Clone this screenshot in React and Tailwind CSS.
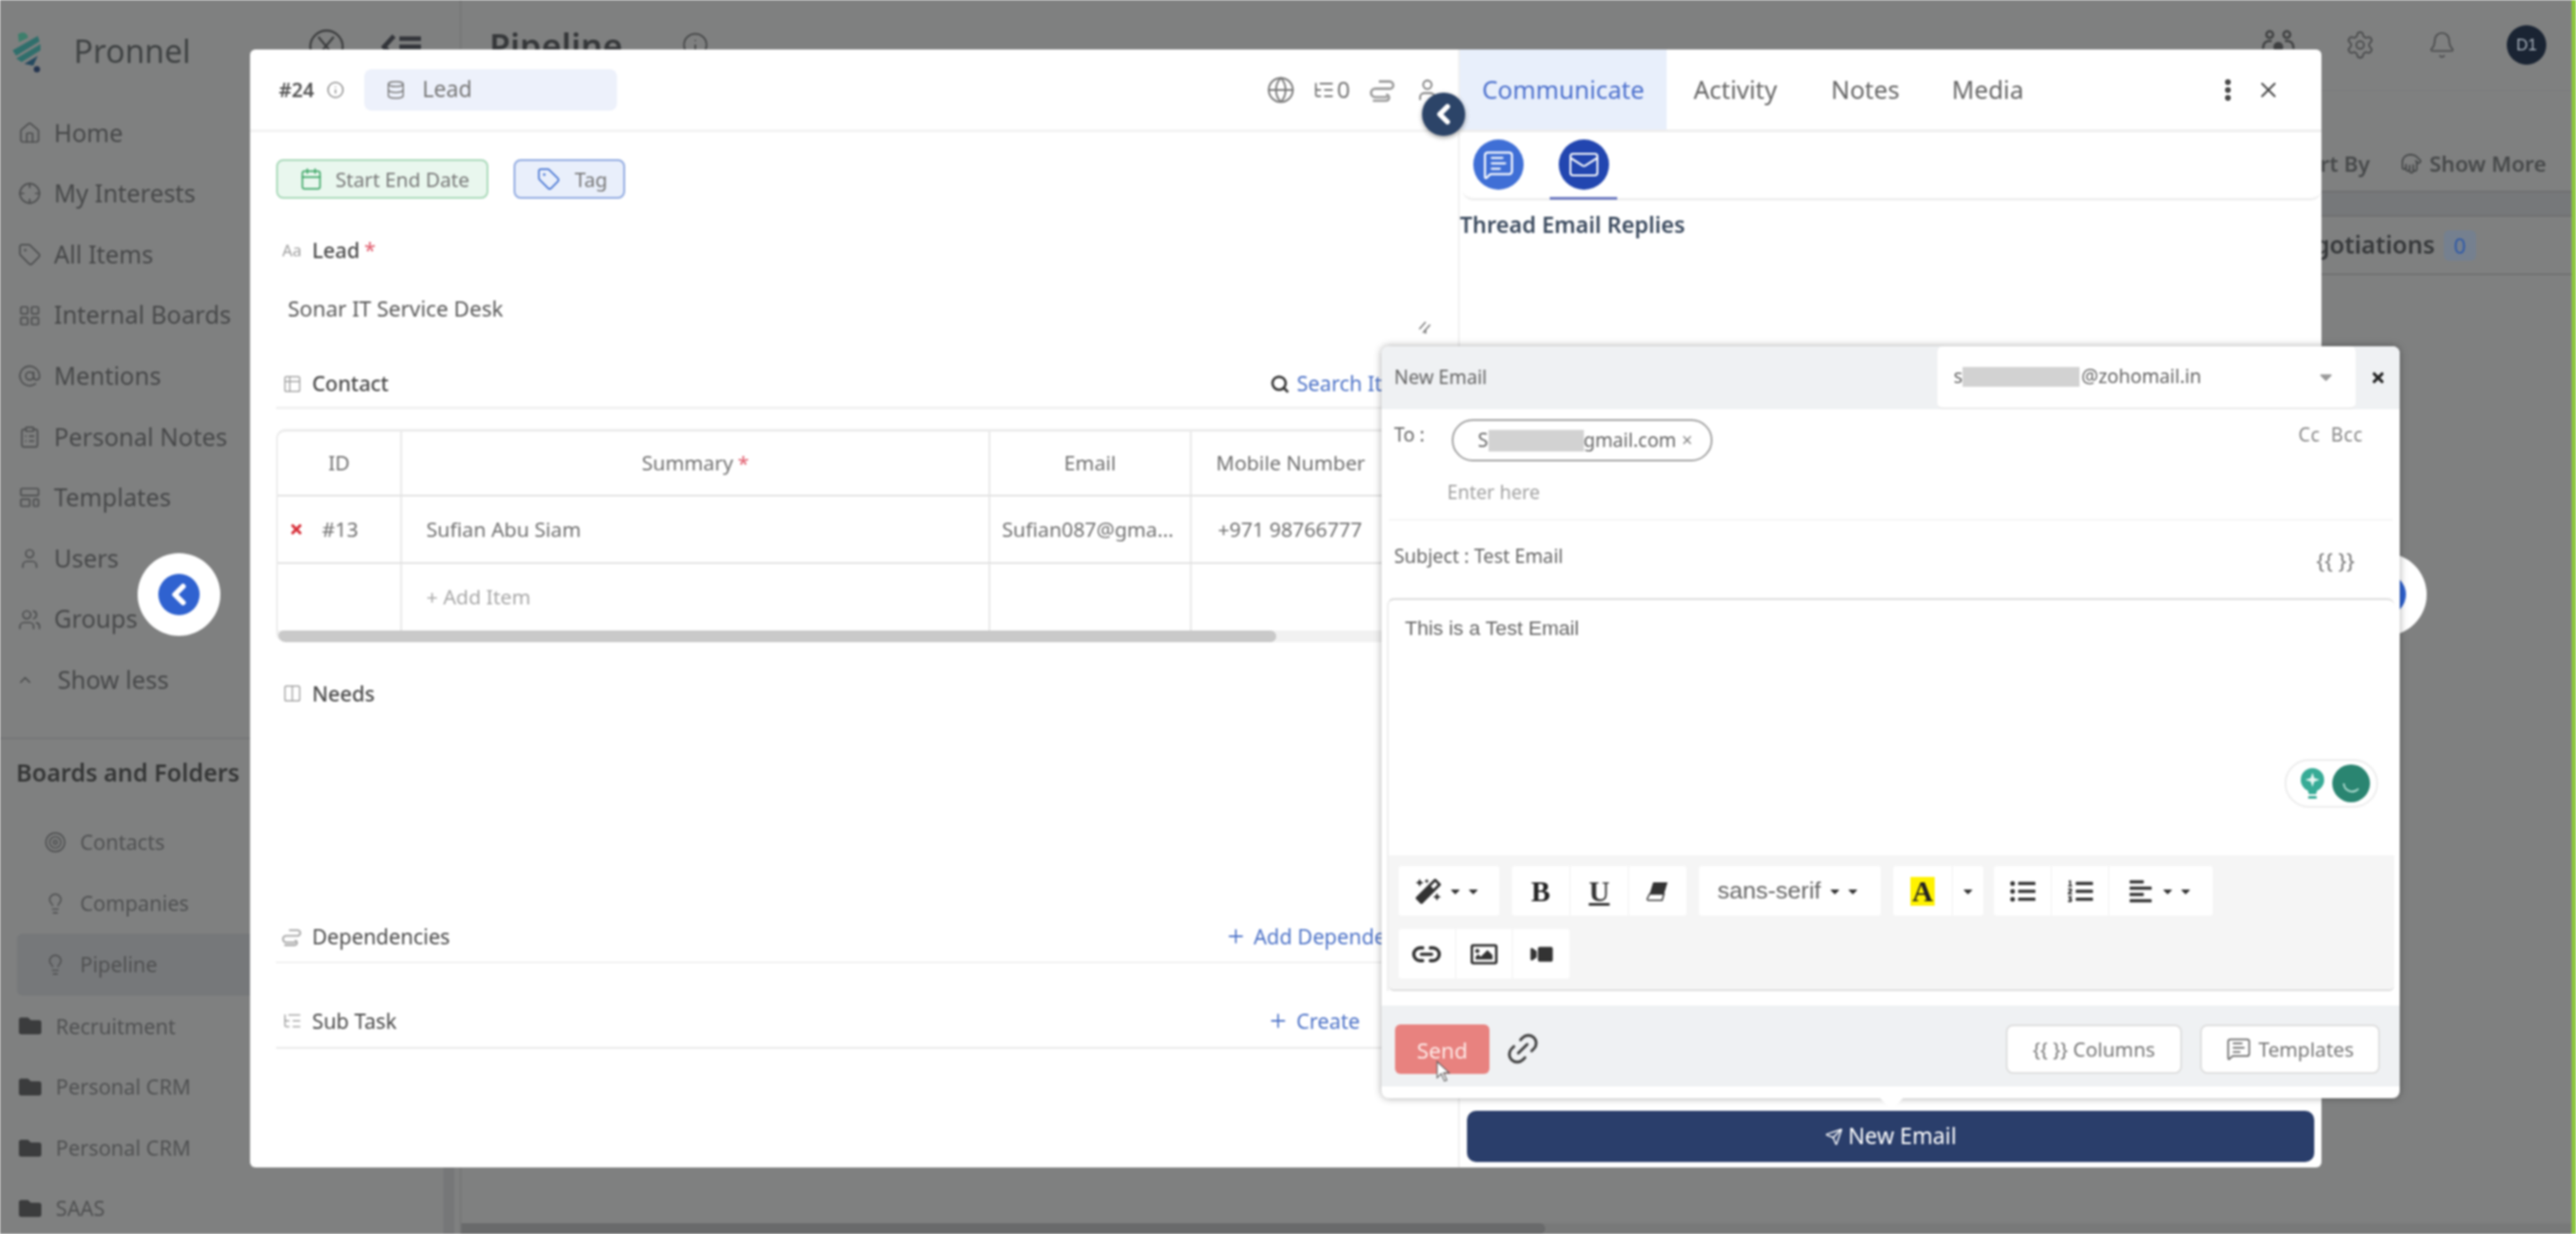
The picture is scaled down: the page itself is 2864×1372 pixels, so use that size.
import {
  Home, Crosshair, Tag, LayoutGrid, AtSign, ClipboardList, LayoutTemplate, User, Users, ChevronUp, ChevronLeft,
  Target, Lightbulb, Info, Globe, ListTree, Calendar, Table2, Search, Plus, X, EllipsisVertical, Settings, Bell,
  MessageSquareText, Mail, Database, Columns2, Send, Link2, Hand,
} from 'lucide-react';
import {
  FaFolder, FaMagic, FaListUl, FaListOl, FaAlignLeft, FaRegImage, FaVideo, FaCaretDown, FaTimes,
} from 'react-icons/fa';

const mainNav = [
  ['Home', Home], ['My Interests', Crosshair], ['All Items', Tag], ['Internal Boards', LayoutGrid], ['Mentions', AtSign],
  ['Personal Notes', ClipboardList], ['Templates', LayoutTemplate], ['Users', User], ['Groups', Users],
];

const folders = ['Recruitment', 'Personal CRM', 'Personal CRM', 'SAAS'];

/* ── Small drawn icons ── */
function Logo() {
  return (
    <svg viewBox="0 0 36 50" className="w-[36px] h-[50px]">
      <path d="M2 24 L30 8 L32 14 L6 30 Z" fill="#2f6f6c" />
      <path d="M6 33 L33 17 L33 24 L12 37 Z" fill="#2f6f6c" />
      <path d="M8 6 C14 2 19 5 19 10 L9 15 Z" fill="#3d7f6c" />
      <path d="M15 39 L30 30 L25 41 Z" fill="#24495f" />
      <circle cx="29" cy="45" r="3.5" fill="#24344f" />
    </svg>
  );
}

function DepsIcon({ className }) {
  return (
    <svg viewBox="0 0 24 24" className={className} fill="none" stroke="currentColor" strokeWidth="2">
      <path d="M9 5h9a3 3 0 0 1 0 6H6a3.5 3.5 0 0 0 0 7h10" />
      <path d="M4 21h11a2.5 2.5 0 0 0 0-5" />
    </svg>
  );
}

function TeamIcon() {
  return (
    <svg viewBox="0 0 36 36" className="w-[38px] h-[38px] text-[#3f4041]" fill="none" stroke="currentColor" strokeWidth="2.4">
      <circle cx="9" cy="7" r="3.5" />
      <circle cx="27" cy="7" r="3.5" />
      <path d="M2 22 C2 15 6 13 11 14 M34 22 C34 15 30 13 25 14" />
      <circle cx="18" cy="20" r="4" fill="currentColor" />
      <path d="M10 33 C10 26 14 26 18 26 C22 26 26 26 26 33 Z" fill="currentColor" />
    </svg>
  );
}

function BulbSpark() {
  return (
    <svg viewBox="0 0 32 38" className="w-[32px] h-[38px]">
      <circle cx="16" cy="15" r="13" fill="#37ab96" />
      <path d="M10 24 H22 L20 31 H12 Z" fill="#37ab96" />
      <rect x="11" y="33" width="10" height="3" rx="1.5" fill="#37ab96" />
      <path d="M16 7 L18 13 L24 15 L18 17 L16 23 L14 17 L8 15 L14 13 Z" fill="#e8f7f3" />
    </svg>
  );
}

function EraserIcon() {
  return (
    <svg viewBox="0 0 26 24" className="w-[26px] h-[24px]">
      <path d="M8 2 H24 L20 15 H4 Z" fill="#333" />
      <path d="M4 15 H20 L18 22 H3 Q1 22 1.5 20 Z" fill="#fff" stroke="#333" strokeWidth="1.5" />
    </svg>
  );
}

function Redacted({ className }) {
  return <span className={`inline-block bg-[#d2d2d2] ${className}`} />;
}

/* ── Page behind the dialog ── */
function Sidebar() {
  return (
    <aside className="relative w-[513px] shrink-0 h-full border-r-2 border-[#767778] overflow-hidden text-[#474849]">
      <div className="h-[114px] flex items-center pl-[12px] pr-[41px]">
        <Logo />
        <span className="ml-[34px] text-[35.5px] text-[#3f4243]">Pronnel</span>
        <svg viewBox="0 0 40 40" className="ml-auto mb-[10px] w-[40px] h-[40px] text-[#3c3d3e]" fill="none" stroke="currentColor" strokeWidth="2.4">
          <circle cx="20" cy="20" r="18" />
          <path d="M11 9 L29 31 M28 9 L13 27" />
        </svg>
        <svg viewBox="0 0 46 32" className="ml-[41px] mb-[10px] w-[46px] h-[32px] text-[#33353a]" fill="none" stroke="currentColor" strokeWidth="5">
          <path d="M14 4 L3 16 L14 28 M20 7 H44 M20 16 H44 M20 25 H44" />
        </svg>
      </div>
      {mainNav.map(([label, Icon]) => (
        <div key={label} className="h-[67.6px] flex items-center pl-[20px] gap-[14px] text-[27px]">
          <Icon className="w-[26px] h-[26px] text-[#4c4d4e]" strokeWidth={1.6} />
          <span>{label}</span>
        </div>
      ))}
      <div className="h-[67.6px] flex items-center pl-[18px] gap-[26px] text-[27px]">
        <ChevronUp className="w-[20px] h-[20px]" />
        <span>Show less</span>
      </div>
      <div className="mt-[30px] h-[83px] border-t-2 border-[#757677] flex items-center pl-[18px] pb-[5px] text-[26.6px] font-semibold text-[#353636]">
        Boards and Folders
      </div>
      <div className="h-[67.6px] flex items-center pl-[49px] gap-[15px] text-[23px] text-[#505152]">
        <Target className="w-[25px] h-[25px]" strokeWidth={1.6} />
        Contacts
      </div>
      <div className="h-[67.6px] flex items-center pl-[49px] gap-[15px] text-[23px] text-[#505152]">
        <Lightbulb className="w-[25px] h-[25px]" strokeWidth={1.6} />
        Companies
      </div>
      <div className="h-[69px] ml-[19px] flex items-center pl-[30px] gap-[15px] text-[23px] text-[#505152] bg-[#76787a] rounded-l-[6px]">
        <Lightbulb className="w-[25px] h-[25px]" strokeWidth={1.6} />
        Pipeline
      </div>
      {folders.map((name, i) => (
        <div key={i} className="h-[67.6px] flex items-center pl-[21px] gap-[16px] text-[23px] text-[#505152]">
          <FaFolder className="w-[25px] h-[25px] text-[#3b3c3d]" />
          {name}
        </div>
      ))}
      <div className="absolute right-[6px] top-[1298px] w-[12px] h-[74px] bg-[#767778]" />
    </aside>
  );
}

function Main() {
  return (
    <main className="relative flex-1 h-full text-[#414243]">
      <div className="h-[100px] flex items-center pl-[31px] pr-[26px]">
        <span className="text-[38px] font-semibold text-[#36383a]">Pipeline</span>
        <Info className="ml-[66px] w-[30px] h-[30px]" strokeWidth={1.4} />
        <div className="ml-auto flex items-center">
          <TeamIcon />
          <Settings className="ml-[55px] w-[34px] h-[34px] text-[#4c4d4e]" strokeWidth={1.4} />
          <Bell className="ml-[58px] w-[32px] h-[32px] text-[#4c4d4e]" strokeWidth={1.4} />
          <span className="ml-[56px] mr-[2px] w-[44px] h-[44px] rounded-full bg-[#1a2433] text-[#a4adb8] text-[18px] font-['Liberation_Sans',sans-serif] flex items-center justify-center">
            D1
          </span>
        </div>
      </div>
      <div className="h-[112px] border-t border-[#7a7b7c] flex items-center justify-end pr-[28px] pt-[50px] text-[24px] font-semibold text-[#47494a]">
        <span>Sort By</span>
        <Hand className="ml-[34px] mr-[8px] w-[24px] h-[24px] rotate-180" strokeWidth={1.8} />
        <span>Show More</span>
      </div>
      <div className="h-[29px] bg-[#76787a] border-y-2 border-[#6f7071]" />
      <div className="h-[65px] border-b-2 border-[#6f7071] flex items-center pl-[2023px] text-[27px] font-semibold text-[#36383a]">
        <span>Negotiations</span>
        <span className="ml-[10px] w-[36px] h-[34px] rounded-[6px] bg-[#75808f] text-[#2e59a8] text-[24px] font-normal flex items-center justify-center">0</span>
      </div>
      <div className="absolute left-0 right-0 bottom-0 h-[12px] bg-[#787979]">
        <div className="w-[1205px] h-full bg-[#696a6b] rounded-r-[6px]" />
      </div>
    </main>
  );
}

/* ── Dialog, left side ── */
function SectionLabel({ icon, children, required }) {
  return (
    <div className="flex items-center gap-[10px] text-[#4b4b4b] text-[23px] pl-[5px]">
      <span className="w-[25px] flex justify-center text-[#a3a3a3]">{icon}</span>
      <span>{children}</span>
      {required && <span className="text-[#e05a6b] -ml-[5px]">*</span>}
    </div>
  );
}

function BlueAction({ children, className }) {
  return (
    <span className={`flex items-center gap-[8px] text-[#4f74c8] text-[23px] whitespace-nowrap ${className}`}>
      <Plus className="w-[24px] h-[24px]" strokeWidth={1.8} />
      {children}
    </span>
  );
}

function ItemsTable() {
  const cols = 'grid grid-cols-[138px_654px_224px_272px]';
  const cell = 'border-r-2 border-[#e8e8e8] flex items-center';
  return (
    <div className="mt-[22px] w-[1290px] rounded-[10px] border-t-[3px] border-l-2 border-[#ececec] overflow-hidden text-[22.5px] text-[#717171]">
      <div className={`${cols} h-[72px] border-b-2 border-[#e2e2e2]`}>
        <div className={`${cell} justify-center`}>ID</div>
        <div className={`${cell} justify-center`}>Summary <span className="text-[#e05a6b] ml-[5px]">*</span></div>
        <div className={`${cell} justify-center`}>Email</div>
        <div className="flex items-center pl-[27px] whitespace-nowrap">Mobile Number</div>
      </div>
      <div className={`${cols} h-[75px] border-b-2 border-[#e2e2e2]`}>
        <div className={`${cell} pl-[12px] gap-[20px]`}>
          <FaTimes className="w-[17px] h-[17px] text-[#d8323c]" />
          #13
        </div>
        <div className={`${cell} pl-[27px]`}>Sufian Abu Siam</div>
        <div className={`${cell} pl-[13px] whitespace-nowrap overflow-hidden`}>Sufian087@gma...</div>
        <div className="flex items-center pl-[29px] whitespace-nowrap">+971 98766777</div>
      </div>
      <div className={`${cols} h-[74px]`}>
        <div className={cell} />
        <div className={`${cell} pl-[27px] text-[#a9a9a9]`}>+ Add Item</div>
        <div className={cell} />
        <div />
      </div>
      <div className="h-[13px] bg-[#f1f1f1] rounded-b-[10px]">
        <div className="w-[1110px] h-full bg-[#c9c9c9] rounded-full" />
      </div>
    </div>
  );
}

function LeadPane() {
  return (
    <section className="w-[1345px] shrink-0 h-full overflow-hidden border-r-2 border-[#f0f0f0]">
      <div className="h-[92px] border-b-[3px] border-[#f3f3f3] flex items-center pl-[32px] pr-[17px] text-[#555]">
        <span className="text-[22px] font-semibold">#24</span>
        <Info className="ml-[14px] w-[20px] h-[20px] text-[#777]" strokeWidth={1.6} />
        <div className="ml-[22px] w-[281px] h-[46px] rounded-[8px] bg-[#edf1fb] flex items-center pl-[24px] gap-[18px] text-[24.5px] text-[#777]">
          <Database className="w-[22px] h-[22px]" strokeWidth={1.6} />
          Lead
        </div>
        <div className="ml-auto flex items-center text-[#777] mr-[3px]">
          <Globe className="w-[32px] h-[32px]" strokeWidth={1.5} />
          <ListTree className="ml-[20px] w-[24px] h-[24px]" strokeWidth={1.8} />
          <span className="text-[26px] ml-[2px]">0</span>
          <DepsIcon className="ml-[20px] w-[32px] h-[32px] text-[#999]" />
          <User className="ml-[20px] w-[28px] h-[28px]" strokeWidth={1.6} />
        </div>
      </div>

      <div className="pl-[29px] pr-[25px]">
        <div className="mt-[30px] flex items-center gap-[28px] text-[22px] text-[#777]">
          <div className="w-[236px] h-[44px] rounded-[8px] border-2 border-[#a8d8b8] bg-[#e9f7ee] flex items-center pl-[24px] gap-[14px] whitespace-nowrap">
            <Calendar className="w-[26px] h-[26px] text-[#3aa564]" strokeWidth={1.6} />
            Start End Date
          </div>
          <div className="w-[124px] h-[44px] rounded-[8px] border-2 border-[#8ea8e0] bg-[#e9effb] flex items-center pl-[24px] gap-[16px]">
            <Tag className="w-[26px] h-[26px] text-[#3f6fd1]" strokeWidth={1.6} />
            Tag
          </div>
        </div>

        <div className="mt-[42px] h-[30px] flex items-center">
          <SectionLabel icon={<span className="text-[18px]">Aa</span>} required><span className="font-medium">Lead</span></SectionLabel>
        </div>
        <div className="mt-[36px] h-[30px] pl-[13px] flex items-center text-[23.8px] text-[#5a5a5a]">Sonar IT Service Desk</div>
        <div className="flex justify-end h-[13px] pr-[4px] items-end">
          <svg viewBox="0 0 16 16" className="w-[16px] h-[16px] text-[#777]" fill="none" stroke="currentColor" strokeWidth="1.6">
            <path d="M2 10 L9 2 M6 14 L14 5 M9 10 L9 15" />
          </svg>
        </div>
        <div className="mt-[37px] h-[46px] border-b-[3px] border-[#f1f1f1] pb-[8px] flex items-center justify-between">
          <SectionLabel icon={<Table2 className="w-[22px] h-[22px]" strokeWidth={1.6} />}><span className="font-medium">Contact</span></SectionLabel>
          <span className="flex items-center gap-[8px] mr-[14px] text-[#4f74c8] text-[23px] whitespace-nowrap">
            <Search className="w-[22px] h-[22px] text-[#333]" strokeWidth={3} />
            Search Items
          </span>
        </div>
        <ItemsTable />
        <div className="mt-[42px] h-[30px] flex items-center">
          <SectionLabel icon={<Columns2 className="w-[22px] h-[22px]" strokeWidth={1.6} />}><span className="font-medium">Needs</span></SectionLabel>
        </div>
        <div className="mt-[236px] h-[49px] border-b-2 border-[#efefef] pb-[9px] flex items-center justify-between">
          <SectionLabel icon={<DepsIcon className="w-[25px] h-[25px] text-[#aaa]" />}>Dependencies</SectionLabel>
          <BlueAction className="shrink-0">Add Dependencies</BlueAction>
        </div>
        <div className="mt-[44px] h-[51px] border-b-2 border-[#e9e9e9] pb-[9px] flex items-center justify-between">
          <SectionLabel icon={<ListTree className="w-[22px] h-[22px]" strokeWidth={1.6} />}>Sub Task</SectionLabel>
          <BlueAction className="mr-[84px]">Create</BlueAction>
        </div>
      </div>
    </section>
  );
}

/* ── Dialog, right side ── */
function CommPane() {
  return (
    <section className="flex-1 h-full flex flex-col">
      <div className="h-[92px] shrink-0 flex items-stretch text-[27.5px] text-[#666] border-b-[3px] border-[#eee]">
        <div className="w-[230px] bg-[#e8effb] text-[#4c70cd] flex items-center justify-center">Communicate</div>
        <div className="ml-[30px] flex items-center">Activity</div>
        <div className="ml-[60px] flex items-center">Notes</div>
        <div className="ml-[58px] flex items-center">Media</div>
        <div className="ml-auto mr-[45px] flex items-center text-[#444]">
          <EllipsisVertical className="w-[30px] h-[30px] text-[#333]" strokeWidth={3} />
          <X className="ml-[16px] w-[28px] h-[28px]" strokeWidth={1.8} />
        </div>
      </div>
      <div className="ml-[3px] h-[76px] shrink-0 border-b-[3px] border-[#f0f0f0] rounded-b-[12px] flex items-start pl-[12px] pt-[8px]">
        <span className="w-[56px] h-[56px] rounded-full bg-[#3f6fd6] flex items-center justify-center">
          <MessageSquareText className="w-[36px] h-[36px] text-white" strokeWidth={1.5} />
        </span>
        <div className="ml-[39px] relative">
          <span className="w-[56px] h-[56px] rounded-full bg-[#2246b0] flex items-center justify-center">
            <Mail className="w-[36px] h-[36px] text-white" strokeWidth={1.4} />
          </span>
          <div className="absolute left-[-10px] top-[64px] w-[75px] h-[3px] bg-[#6a78c0]" />
        </div>
      </div>
      <div className="mt-[8px] text-[24.8px] font-semibold text-[#3d4c60] whitespace-nowrap">Thread Email Replies</div>
      <div className="mt-auto mb-[6px] ml-[8px] w-[942px] h-[57px] bg-[#2a3e6b] rounded-[10px] flex items-center justify-center gap-[6px] text-white text-[24.5px]">
        <Send className="w-[20px] h-[20px]" strokeWidth={1.8} />
        New Email
      </div>
    </section>
  );
}

/* ── Compose popup ── */
function ToolGroup({ children, className = '' }) {
  return <div className={`h-[55px] bg-white flex items-stretch rounded-[3px] ${className}`}>{children}</div>;
}

function ToolBtn({ children, className = '' }) {
  return <div className={`flex items-center justify-center border-r border-[#f1f1f1] last:border-r-0 ${className}`}>{children}</div>;
}

function Carets({ count = 2 }) {
  return (
    <span className="flex items-center text-[#333]">
      {Array.from({ length: count }).map((_, i) => (
        <FaCaretDown key={i} className="w-[16px] h-[16px] mx-[2px]" />
      ))}
    </span>
  );
}

function Toolbar() {
  return (
    <div className="h-[153px] bg-[#f5f5f5] border-b-[2px] border-[#dedede] pl-[11px] pt-[12px] rounded-b-[6px] text-[#333]">
      <div className="flex items-center">
        <ToolGroup className="w-[112px] mr-[14px]">
          <ToolBtn className="w-full gap-[6px]"><FaMagic className="w-[28px] h-[28px]" /><Carets /></ToolBtn>
        </ToolGroup>
        <ToolGroup className="mr-[14px]">
          <ToolBtn className="w-[65px] font-['Liberation_Serif',serif] font-bold text-[32px] text-[#222]">B</ToolBtn>
          <ToolBtn className="w-[65px] font-['Liberation_Serif',serif] font-bold text-[32px] underline text-[#333]">U</ToolBtn>
          <ToolBtn className="w-[64px]"><EraserIcon /></ToolBtn>
        </ToolGroup>
        <ToolGroup className="w-[202px] mr-[14px]">
          <ToolBtn className="w-full gap-[6px] font-['Liberation_Sans',sans-serif] text-[26.5px] text-[#666]">sans-serif <Carets /></ToolBtn>
        </ToolGroup>
        <ToolGroup className="mr-[14px]">
          <ToolBtn className="w-[66px]"><span className="bg-[#fff200] px-[2px] font-['Liberation_Serif',serif] font-bold text-[32px] leading-[32px] text-[#222]">A</span></ToolBtn>
          <ToolBtn className="w-[34px]"><Carets count={1} /></ToolBtn>
        </ToolGroup>
        <ToolGroup className="-ml-[2px]">
          <ToolBtn className="w-[64px]"><FaListUl className="w-[28px] h-[28px]" /></ToolBtn>
          <ToolBtn className="w-[64px]"><FaListOl className="w-[28px] h-[28px]" /></ToolBtn>
          <ToolBtn className="w-[115px] gap-[6px]"><FaAlignLeft className="w-[28px] h-[28px]" /><Carets /></ToolBtn>
        </ToolGroup>
      </div>
      <ToolGroup className="mt-[15px] w-[190px]">
        <ToolBtn className="flex-1"><Link2 className="w-[34px] h-[34px]" strokeWidth={2.6} /></ToolBtn>
        <ToolBtn className="flex-1"><FaRegImage className="w-[32px] h-[30px]" /></ToolBtn>
        <ToolBtn className="flex-1"><FaVideo className="w-[28px] h-[22px] -scale-x-100" /></ToolBtn>
      </ToolGroup>
    </div>
  );
}

function ComposePopup() {
  return (
    <div className="absolute left-[1536px] top-[385px] w-[1132px] h-[836px] bg-white rounded-[8px] shadow-[0_0_8px_rgba(0,0,0,0.35)] flex flex-col text-[#666] text-[21px]">
      <div className="h-[70px] shrink-0 bg-[#eff1f3] rounded-t-[8px] flex items-stretch">
        <div className="flex-1 flex items-center pl-[14px]">New Email</div>
        <div className="w-[465px] bg-white rounded-[6px] border-b-2 border-[#eaeaea] flex items-center pl-[18px] pr-[22px]">
          <span>s</span>
          <Redacted className="w-[130px] h-[22px]" />
          <span className="ml-[2px]">@zohomail.in</span>
          <FaCaretDown className="ml-auto w-[22px] h-[22px] text-[#999]" />
        </div>
        <div className="w-[49px] flex items-center justify-center">
          <FaTimes className="w-[18px] h-[18px] text-[#222]" />
        </div>
      </div>

      <div className="h-[124px] shrink-0 mx-[8px] border-b-2 border-[#f5f5f5] relative pl-[6px]">
        <div className="flex items-start">
          <span className="w-[64px] pt-[13px]">To :</span>
          <div className="mt-[11px] h-[47px] w-[290px] rounded-full border-2 border-[#a0a0a0] flex items-center pl-[27px] whitespace-nowrap">
            <span>S</span>
            <Redacted className="w-[106px] h-[24px]" />
            <span>gmail.com</span>
            <span className="ml-[6px] text-[#888]">×</span>
          </div>
          <span className="ml-auto pt-[13px] pr-[33px] text-[#888] tracking-wide">Cc&nbsp;&nbsp;Bcc</span>
        </div>
        <div className="ml-[59px] mt-[19px] text-[#a2a2a2]">Enter here</div>
      </div>

      <div className="h-[86px] shrink-0 pl-[14px] pr-[50px] flex items-center justify-between">
        <span className="mb-[7px]">Subject : Test Email</span>
        <span className="pt-[2px] text-[#777] text-[24px]">{'{{ }}'}</span>
      </div>

      <div className="mx-[6px] h-[437px] shrink-0 border-t-[2px] border-[#dcdcdc] border-l-[2px] border-l-[#eeeeee] rounded-t-[8px] flex flex-col font-['Liberation_Sans',sans-serif]">
        <div className="h-[284px] shrink-0 relative pl-[18px] pt-[15px] text-[22.5px] text-[#666]">
          This is a Test Email
          <div className="absolute right-[18px] top-[177px] w-[104px] h-[54px] rounded-full border-2 border-[#ececec] flex items-center pl-[13px] gap-[6px]">
            <BulbSpark />
            <span className="w-[42px] h-[42px] rounded-full bg-[#2a8571] flex items-center justify-center">
              <svg viewBox="0 0 24 24" className="w-[28px] h-[28px]" fill="none" stroke="#a8d8cc" strokeWidth="1.8">
                <path d="M5 12 a8 8 0 0 0 14 5" />
              </svg>
            </span>
          </div>
        </div>
        <Toolbar />
      </div>

      <div className="mt-[16px] h-[90px] shrink-0 bg-[#eff1f3] flex items-center pl-[15px] pr-[22px] pt-[6px]">
        <div className="relative w-[105px] h-[55px] rounded-[6px] bg-[#e8827f] text-[#fde9e6] text-[24px] flex items-center justify-center pt-[4px]">
          Send
          <svg viewBox="0 0 20 28" className="absolute left-[45px] top-[40px] w-[18px] h-[26px] z-10">
            <path d="M2 1 L2 21 L7 16 L11 25 L14 24 L10 15 L17 15 Z" fill="#fff" stroke="#555" strokeWidth="1.2" />
          </svg>
        </div>
        <Link2 className="ml-[16px] w-[42px] h-[42px] text-[#444] -rotate-45" strokeWidth={1.8} />
        <div className="ml-auto flex items-center gap-[20px]">
          <div className="w-[196px] h-[55px] rounded-[8px] bg-white border-2 border-[#dedede] flex items-center justify-center gap-[6px] text-[22px] text-[#777]">
            {'{{ }}'} Columns
          </div>
          <div className="w-[200px] h-[55px] rounded-[8px] bg-white border-2 border-[#dedede] flex items-center justify-center gap-[8px] text-[22px] text-[#777]">
            <MessageSquareText className="w-[28px] h-[28px] text-[#666]" strokeWidth={1.5} />
            Templates
          </div>
        </div>
      </div>
      <div className="absolute left-[558px] bottom-[-9px] w-[18px] h-[18px] bg-white rotate-45" />
    </div>
  );
}

function SlideCircle({ className }) {
  return (
    <div className={`absolute w-[92px] h-[92px] rounded-full bg-white flex items-center justify-center ${className}`}>
      <span className="w-[46px] h-[46px] rounded-full bg-[#2f62d0] flex items-center justify-center">
        <ChevronLeft className="w-[36px] h-[36px] text-white" strokeWidth={4} />
      </span>
    </div>
  );
}

export default function App() {
  return (
    <div className="relative w-[2864px] h-[1372px] overflow-hidden bg-[#7f8080] font-['Noto_Sans',sans-serif] blur-[1px]">
      <div className="flex h-full pr-[5px]">
        <Sidebar />
        <Main />
      </div>
      <div className="absolute right-0 top-0 bottom-0 w-[5px] bg-[#8cc63f]" />

      <SlideCircle className="left-[153px] top-[615px]" />
      <SlideCircle className="left-[2606px] top-[615px]" />

      {/* Item dialog */}
      <div className="absolute left-[278px] top-[55px] w-[2303px] h-[1243px] bg-white rounded-[6px] flex overflow-hidden">
        <LeadPane />
        <CommPane />
      </div>

      <div className="absolute left-[1581px] top-[103px] w-[48px] h-[48px] rounded-full bg-[#2c4468] shadow-[0_2px_5px_rgba(0,0,0,0.4)] flex items-center justify-center">
        <ChevronLeft className="w-[34px] h-[34px] text-white" strokeWidth={4} />
      </div>

      <ComposePopup />
    </div>
  );
}
